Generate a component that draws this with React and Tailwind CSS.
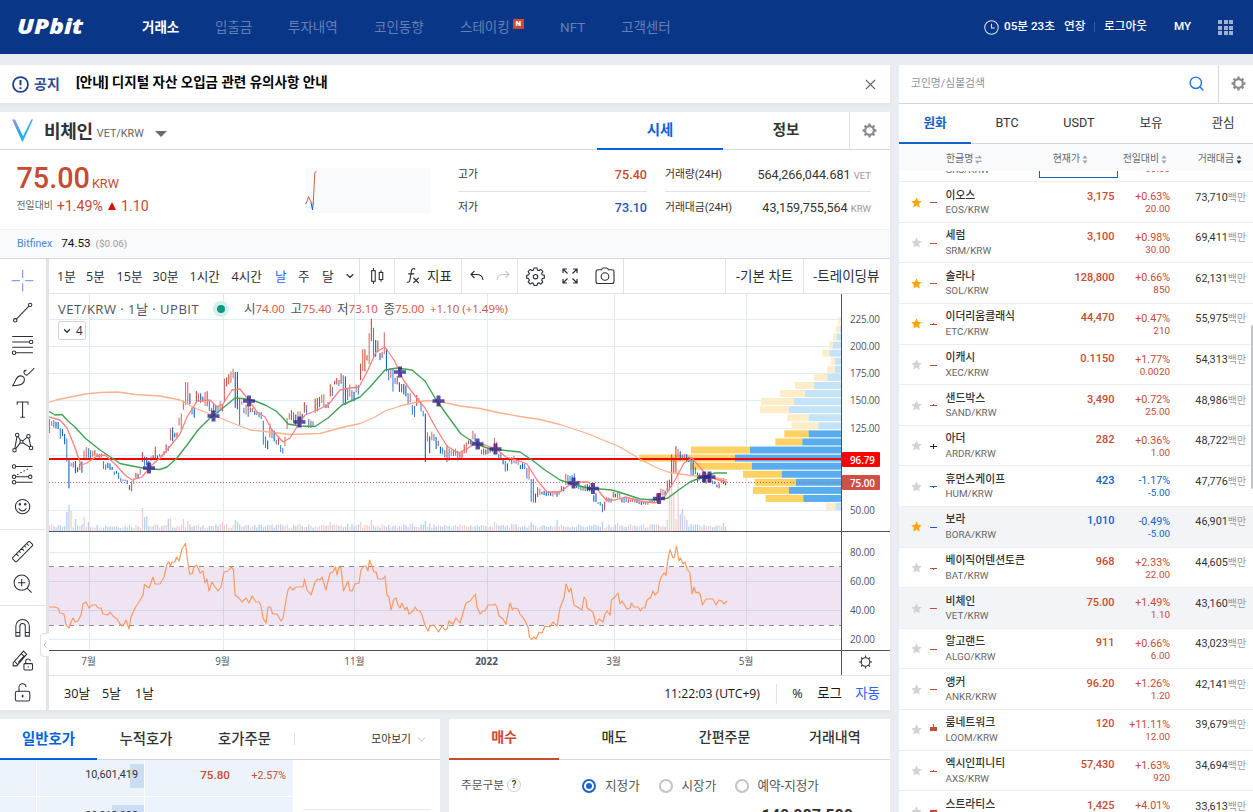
import { clsx } from "clsx";
import { Search, X, ChevronDown } from "lucide-react";

const NAV = [
  { label: "거래소", width: "w-[73px]", active: true },
  { label: "입출금", width: "w-[73px]" },
  { label: "투자내역", width: "w-[86px]" },
  { label: "코인동향", width: "w-[86px]" },
  { label: "스테이킹", width: "w-[100px]", isNew: true },
  { label: "NFT", width: "w-[61px]" },
  { label: "고객센터", width: "w-[60px]" },
];

const COINS = [
  { name: "이오스", code: "EOS", price: "3,175", rate: "+0.63%", diff: "20.00", volume: "73,710", fav: true },
  { name: "세럼", code: "SRM", price: "3,100", rate: "+0.98%", diff: "30.00", volume: "69,411" },
  { name: "솔라나", code: "SOL", price: "128,800", rate: "+0.66%", diff: "850", volume: "62,131", fav: true },
  { name: "이더리움클래식", code: "ETC", price: "44,470", rate: "+0.47%", diff: "210", volume: "55,975", fav: true, up: 1 },
  { name: "이캐시", code: "XEC", price: "0.1150", rate: "+1.77%", diff: "0.0020", volume: "54,313" },
  { name: "샌드박스", code: "SAND", price: "3,490", rate: "+0.72%", diff: "25.00", volume: "48,986", up: 1 },
  { name: "아더", code: "ARDR", price: "282", rate: "+0.36%", diff: "1.00", volume: "48,722", up: 2, down: 2, flat: true },
  { name: "휴먼스케이프", code: "HUM", price: "423", rate: "-1.17%", diff: "-5.00", volume: "47,776", down: 1 },
  { name: "보라", code: "BORA", price: "1,010", rate: "-0.49%", diff: "-5.00", volume: "46,901", fav: true, shaded: true },
  { name: "베이직어텐션토큰", code: "BAT", price: "968", rate: "+2.33%", diff: "22.00", volume: "44,605", down: 1 },
  { name: "비체인", code: "VET", price: "75.00", rate: "+1.49%", diff: "1.10", volume: "43,160", shaded: true },
  { name: "알고랜드", code: "ALGO", price: "911", rate: "+0.66%", diff: "6.00", volume: "43,023" },
  { name: "앵커", code: "ANKR", price: "96.20", rate: "+1.26%", diff: "1.20", volume: "42,141" },
  { name: "룸네트워크", code: "LOOM", price: "120", rate: "+11.11%", diff: "12.00", volume: "39,679", body: 4, up: 3 },
  { name: "엑시인피니티", code: "AXS", price: "57,430", rate: "+1.63%", diff: "920", volume: "34,694", up: 1 },
  { name: "스트라티스", code: "STRAX", price: "1,425", rate: "+4.01%", diff: "55.00", volume: "33,613", body: 2 },
];

// x, top, bottom of the daily range
const RANGE = [
  [49, 419, 437], [52, 418, 428], [55, 420, 429], [58, 421, 430], [61, 426, 440], [64, 433, 449], [67, 438, 463],
  [69, 457, 489], [72, 459, 470], [75, 460, 476], [78, 462, 477], [81, 459, 475], [84, 445, 462], [87, 445, 459],
  [91, 449, 459], [94, 448, 459], [97, 452, 458], [100, 453, 459], [103, 460, 470], [106, 463, 471], [109, 463, 470],
  [112, 466, 472], [115, 469, 476], [118, 472, 479], [121, 477, 482], [124, 479, 482], [127, 478, 485], [130, 482, 492],
  [132, 479, 493], [134, 476, 484], [137, 471, 480], [140, 468, 475], [143, 451, 462], [146, 452, 470], [149, 460, 469],
  [152, 455, 462], [155, 446, 460], [158, 455, 460], [161, 454, 458], [164, 450, 456], [167, 443, 453], [170, 425, 445],
  [173, 426, 444], [176, 432, 439], [179, 417, 430], [182, 413, 432], [184, 396, 412], [187, 382, 405], [190, 393, 405],
  [192, 404, 420], [194, 406, 420], [197, 389, 404], [200, 392, 403], [203, 395, 405], [206, 391, 408], [209, 400, 414],
  [212, 405, 418], [215, 403, 415], [218, 405, 414], [221, 401, 413], [224, 378, 402], [226, 377, 388], [229, 373, 385],
  [232, 371, 384], [234, 367, 380], [236, 371, 410], [239, 398, 426], [242, 398, 408], [245, 404, 417], [248, 404, 418],
  [252, 405, 415], [256, 408, 418], [260, 412, 420], [263, 420, 445], [267, 435, 452], [270, 423, 440], [273, 428, 443],
  [277, 437, 446], [280, 443, 453], [283, 445, 456], [286, 430, 450], [288, 417, 430], [290, 410, 424], [295, 412, 426],
  [300, 409, 424], [305, 400, 415], [311, 418, 428], [317, 398, 413], [322, 393, 408], [327, 401, 411], [332, 381, 402],
  [337, 378, 388], [342, 369, 385], [344, 375, 405], [348, 383, 402], [353, 388, 402], [359, 380, 397], [361, 363, 383],
  [363, 348, 372], [367, 351, 364], [370, 332, 365], [372, 318, 342], [374, 326, 359], [377, 340, 357], [381, 350, 362],
  [385, 331, 355], [387, 347, 372], [390, 367, 383], [392, 368, 393], [396, 373, 388], [400, 382, 393], [405, 383, 398],
  [409, 388, 408], [413, 402, 418], [418, 395, 407], [422, 398, 412], [424, 408, 418], [426, 412, 465], [428, 428, 447],
  [430, 435, 456], [433, 430, 442], [437, 435, 452], [442, 445, 455], [446, 445, 463], [449, 448, 464], [453, 447, 457],
  [461, 450, 462], [465, 442, 455], [470, 437, 447], [475, 429, 445], [478, 440, 450], [483, 448, 457], [490, 446, 455],
  [495, 436, 455], [499, 450, 462], [503, 458, 467], [507, 460, 472], [512, 455, 465], [517, 458, 465], [523, 462, 472],
  [528, 465, 482], [532, 478, 503], [536, 491, 506], [539, 487, 497], [543, 490, 496], [548, 490, 497], [557, 490, 497],
  [562, 485, 493], [567, 472, 485], [572, 473, 485], [578, 483, 490], [583, 483, 492], [588, 482, 493], [592, 487, 493],
  [595, 493, 503], [599, 500, 506], [603, 500, 513], [608, 497, 503], [615, 492, 500], [619, 488, 500], [623, 497, 503],
  [633, 498, 504], [643, 501, 505], [653, 498, 503], [658, 493, 503], [663, 488, 497], [668, 478, 492], [671, 454, 487],
  [673, 455, 475], [677, 445, 473], [679, 446, 463], [683, 452, 463], [688, 453, 465], [692, 457, 477], [695, 463, 477],
  [700, 472, 482], [705, 475, 485], [710, 473, 485], [715, 480, 485], [718, 482, 490], [723, 477, 485], [727, 482, 486],
];

const MA_SLOW =
  "49,402.5 56,400 68,397.5 85,394 100,392.5 118,392 135,394.5 160,396 180,400 195,408 215,416 235,424 250,430 270,432 290,434.5 320,433.5 342,427.5 360,423.5 375,417 385,411 400,406 415,402.5 427,400.5 440,401.5 460,406 480,408.5 500,413 520,416.5 540,419.5 560,424.5 580,431 590,434.5 604,440.5 618,446 630,453 640,459 655,467 668,472 680,474 690,475.5 717,478 727,480";
const MA_MID =
  "49,411.5 55,415 62,414.5 68,421 75,427 85,438 100,450 112,458 120,463.5 132,466 148,469 160,469.5 167,467 177,458 187,445 198,430 210,418 223,408 235,398 247,399 255,401 265,405 276,411 283,418 288,424 300,426 315,426.5 328,418 342,405 360,397 370,387 385,370 397,368 412,370 425,381 435,398 447,415 461,434 476,444 490,449 506,450.5 520,452 532,460 545,470 560,480 575,485 590,488.5 600,489 612,490 625,494 640,499 655,500 668,498 680,489 690,482 702,477 715,473 727,473";
const MA_FAST =
  "49,417 60,420 67,428 74,445 81,465 87,463 97,456 105,455 115,464 125,475 132,480 142,477 152,465 160,458 168,449 180,434 187,417 197,401 210,400 217,407 223,404 232,390 240,389 247,398 257,412 265,417 272,430 283,442 290,438 300,422 305,415 315,411 328,405 340,390 350,388 359,387 368,370 376,352 385,347 394,360 404,381 415,396 425,408 437,430 447,446 458,453 467,449 475,443 485,445 496,449 506,457 516,460 527,464 537,480 547,492 560,492 568,486 578,482 588,482 598,490 606,500 615,500 625,497 640,501 655,503 665,496 675,480 684,463 692,458 698,465 705,473 715,479 727,482";
const RSI =
  "49,607 54,607 58,608 60,613 64,614 66,625 69,628 71,622 73,618 75,622 78,621 81,615 83,604 86,602 89,608 92,605 96,605 98,608 101,608 103,614 108,615 110,612 113,616 117,619 120,624 122,626 124,624 126,620 129,629 131,617 135,608 139,602 143,595 144.5,584.5 149,588 153,577 155,584 160,584 164,577 167,564 169,562 170.5,566 172,562 175,562 176.5,557 179,561 182,549 185.5,543.5 187.5,560 189.5,574 192,574 194,567 196.5,565 198,568 200,573 203,571 205,583 207,579 209,591 212,582 215,587 218,591 221,587 224,572 228,571 231,567 233.5,570 235,595 239,598 242,602 246,598 249,603 252,596 256,602 259,602 261,606 263,618 266,623 268,607 270.5,607 272.5,614 277,614 281,621 283,618 286,600 288,590 290,587 293,590 296,587 303,587 304.5,579 307,590 311,595 315,582 318,579 320,580 322,577 326,590 330,573 333,572 335.5,567 337,575 339,567 341,568 343.5,591 348,581 350,591 352,591 355,584 359,583 361,570 364,566 366,566 368,571 369.5,560 374,572 376,572 378,579 383,579 385,576 387,595 389,597 391,610 394,599 396,598 398,605 400,608 402,603 405,610 407,607 409,614 413,611 415,607 417,610 420,611 422,615 425,625 428,631 430,626 434,625 438.5,632 442,626 445,630 447,629 449,621 453,624 456,618 460,623 463,613 466,603 470,601 475.5,594 477,607 480,614 483,611 485,611 488,605 493,605 495,604 497,607 499,616 503,619 506,624.5 508,613 510,603 512.5,610 514,608 518,609 520,614 524,619 528,627 529.5,637 531.5,639.5 534,637 536,639 539,632 542,633 545,626 550,627 553,622 557,626 560,608 564,598 566,584 569,592 571,588 574,605 579,608 582,610 584,597 586,600 587,608 590,610 593,612 596,625 599,619 603,622 605,614 607,611 610,615 611.5,600 615,597 618,593 620,604 622,601 627,609 630,608 631.5,603 634,607 638,607 640.5,611 642,608 645,608 647,600 651,597 653,591 655,595 658,592 659.5,582 661,578 664,573 666,575 668,559 670,549.5 673,558 674.5,557 676.5,546 679,561 680.5,558 683,564 685,562 687,569 690,573 692,594 694,587 696,593 698,592 700,594 702.5,605 706,599 713,599 716,605 719,600 722,601 724,604 727,601";

const CROSSES = [
  [149, 468], [213.5, 416], [249, 401], [299.5, 422], [400, 372], [438.5, 401], [477.5, 444],
  [495.5, 449], [573.5, 483], [593, 488.5], [659, 498.5], [704, 477], [709.5, 477],
];

// left edge and colour boundary of each volume profile row
const PROFILE = [
  [838, 841], [835.7, 840], [833, 836.7], [829.3, 833], [822.3, 829.3], [831, 835], [827, 835], [814, 827.3],
  [795, 814], [780, 805], [761, 794], [760, 789], [787, 808.7], [791.7, 818.3], [784.3, 808.7, 1], [775.3, 802.3, 1],
  [691, 750, 1], [639.3, 735, 1], [690.3, 752, 1], [743, 781.7, 1], [754.7, 796, 1], [753, 789, 1], [765.7, 803.3, 1],
  [826, 835.7],
];

// day index -> volume bar height
const VOLUME_SPIKES = {
  8: 19, 9: 26, 10: 20, 12: 12, 16: 14, 18: 9, 43: 23, 44: 14, 45: 15, 55: 12, 56: 13, 62: 12, 64: 10,
  80: 9, 86: 11, 87: 9, 130: 9, 144: 9, 149: 11, 174: 10, 206: 9, 223: 9, 235: 11, 256: 9, 263: 8, 286: 11,
  287: 46, 288: 66, 289: 39, 290: 12, 291: 62, 292: 17, 293: 22, 294: 15, 295: 11, 312: 8,
};

const V_GRID = [89, 223, 354, 487, 614, 746];
const PRICE_TICKS = [
  ["225.00", 319], ["200.00", 346], ["175.00", 373], ["150.00", 400], ["125.00", 428], ["50.00", 510],
];
const RSI_TICKS = [["80.00", 552], ["60.00", 581], ["40.00", 610], ["20.00", 639]];
const MONTHS = [["7월", 88.5], ["9월", 222.5], ["11월", 354.5], ["2022", 486.5], ["3월", 613.5], ["5월", 746]];

function noise(i) {
  const v = Math.sin(i * 12.9898) * 43758.5453;
  return v - Math.floor(v);
}

function buildDays() {
  const days = [];
  let k = 0;
  let prev = 428;
  for (let i = 0; i < 314; i++) {
    const x = 49.5 + i * 2.16;
    while (k < RANGE.length - 2 && RANGE[k + 1][0] < x) k++;
    const a = RANGE[k];
    const b = RANGE[k + 1];
    const near = x - a[0] < b[0] - x ? a : b;
    const len = near[2] - near[1];
    // long wicks keep their full reach
    const trim = len > 22 ? 0.06 : 0.35;
    const top = near[1] + noise(i) * len * trim;
    const bottom = near[2] - noise(i + 500) * len * trim;
    const mid = (top + bottom) / 2;
    const red = mid + (noise(i + 90) - 0.5) * 5 < prev;
    prev = mid;
    days.push({
      x,
      top,
      bottom,
      red,
      faint: noise(i + 230) > 0.5,
      volume: VOLUME_SPIKES[i] ?? 3 + noise(i + 40) * 4,
    });
  }
  return days;
}

const DAYS = buildDays();

function TradingChart() {
  return (
    <svg viewBox="49 294 841 381" className="block h-[381px] w-[841px] bg-white">
      {PRICE_TICKS.map(([, y]) => (
        <rect key={y} x="49" y={y} width="792" height="1" fill="#e1ecf2" />
      ))}
      <rect x="49" y="455" width="792" height="1" fill="#e1ecf2" />
      {RSI_TICKS.map(([, y]) => (
        <rect key={y} x="49" y={y} width="792" height="1" fill="#e1ecf2" />
      ))}
      {V_GRID.map((x) => (
        <rect key={x} x={x} y="294" width="1" height="356" fill="#dfeaf2" />
      ))}

      {/* volume */}
      {DAYS.map((d) => (
        <rect
          key={d.x}
          x={d.x - 0.6}
          y={531 - d.volume}
          width="1.3"
          height={d.volume}
          fill={d.red ? "#f3c5c2" : "#a9c8ec"}
          opacity="0.85"
        />
      ))}

      {/* volume profile */}
      {PROFILE.map(([left, split, strong], i) => {
        const y = 317.4 + i * 8.07;
        return (
          <g key={y} opacity={strong ? 1 : 0.9}>
            <rect x={left} y={y} width={split - left} height="7" fill={strong ? "#fdd262" : "#feecc4"} />
            <rect x={split} y={y} width={841 - split} height="7" fill={strong ? "#59adee" : "#bfe1f8"} />
          </g>
        );
      })}

      {/* daily candles */}
      {DAYS.map((d) => (
        <rect
          key={d.x}
          x={d.x - 0.55}
          y={d.top}
          width="1.1"
          height={d.bottom - d.top}
          fill={d.red ? "#cb4a40" : "#1261c4"}
          opacity={d.faint ? 0.78 : 1}
        />
      ))}

      <rect x="49" y="458" width="792" height="2" fill="#f80000" />
      <line x1="49" x2="841" y1="482.5" y2="482.5" stroke="#d3635c" strokeDasharray="1 2" />

      <g fill="none" strokeLinejoin="round">
        <polyline points={MA_SLOW} stroke="#ffb08c" strokeWidth="1.3" />
        <polyline points={MA_MID} stroke="#41a255" strokeWidth="1.4" />
        <polyline points={MA_FAST} stroke="#ff8080" strokeWidth="1.3" />
      </g>
      {CROSSES.map(([x, y]) => (
        <path
          key={x}
          d={`M${x - 2} ${y - 5.5}h4v3.7h4v3.6h-4v3.7h-4v-3.7h-4v-3.6h4z`}
          fill="#2a1f8c"
          opacity="0.78"
        />
      ))}

      {/* RSI */}
      <rect x="49" y="567" width="792" height="58" fill="#8e3fa0" opacity="0.14" />
      <path d="M49 566.5H841M49 625.5H841" stroke="#8c8790" strokeDasharray="5 5" />
      <polyline points={RSI} fill="none" stroke="#f99a62" strokeWidth="1.2" strokeLinejoin="round" />

      <rect x="49" y="531" width="841" height="1" fill="#50535e" />
      <rect x="49" y="650" width="841" height="1" fill="#50535e" />
      <rect x="841" y="294" width="1" height="381" fill="#50535e" />

      <g fontFamily="'Open Sans', 'Noto Sans CJK KR', sans-serif" fontSize="9.9" fill="#50535e">
        {[...PRICE_TICKS, ...RSI_TICKS].map(([label, y]) => (
          <text key={label} x="850" y={y + 4} textLength={label.length > 5 ? 30 : 25}>
            {label}
          </text>
        ))}
        {MONTHS.map(([label, x]) => (
          <text key={label} x={x} y="665" textAnchor="middle" fontWeight={label === "2022" ? 700 : 400}>
            {label}
          </text>
        ))}
        <rect x="842" y="452" width="38" height="15" rx="1" fill="#ff0000" />
        <rect x="842" y="475" width="38" height="15" rx="1" fill="#d24f45" />
        <text x="850" y="463.5" fill="#fff" fontWeight="600" textLength="25">96.79</text>
        <text x="850" y="487" fill="#fff" fontWeight="600" textLength="25">75.00</text>
      </g>

      <g fill="none" stroke="#2a2e39" strokeWidth="1.1">
        <circle cx="865.5" cy="662" r="4.3" />
        <path d="M865.5 657.5v-2M865.5 666.5v2M861 662h-2M870 662h2M862.4 658.9l-1.4-1.4M868.6 665.1l1.4 1.4M862.4 665.1l-1.4 1.4M868.6 658.9l1.4-1.4" />
      </g>
    </svg>
  );
}

function ToolIcon({ children, className }) {
  return (
    <div className="flex h-[32.4px] w-[45px] items-center justify-center">
      <svg
        viewBox="0 0 28 28"
        className={clsx("size-[25.2px]", className ?? "text-[#2a2e39]")}
        fill="none"
        stroke="currentColor"
        strokeWidth="1.15"
      >
        {children}
      </svg>
    </div>
  );
}

function DrawingTools() {
  return (
    <div className="relative w-[46px] shrink-0 bg-white pt-[5px]">
      <ToolIcon className="text-[#7ea3fb]">
        <path d="M14 2v9M14 17v9M2 14h9M17 14h9" strokeWidth="1.4" />
      </ToolIcon>
      <ToolIcon>
        <circle cx="5.8" cy="22.6" r="1.9" />
        <circle cx="22.4" cy="5.4" r="1.9" />
        <path d="M7.2 21.2L21 6.8" />
      </ToolIcon>
      <ToolIcon>
        <path d="M2.5 5h23M2.5 11h19M2.5 17h23M6.5 23h19" />
        <circle cx="23.5" cy="11" r="1.9" />
        <circle cx="4.5" cy="23" r="1.9" />
      </ToolIcon>
      <ToolIcon>
        <path d="M2.5 23c1.700-.8 2-3 3.300-5.300 1.700-4 4.700-6.500 8-5.200 2.800 1.200 3 5 .5 7.700-2.500 2.700-7 2.800-11.800 2.800zM16.200 5.500c-1.300 2-.8 5 1.600 5.700 1.200.2 2-.3 2.700-1.200L27 3.500M16.200 7l2-1.500" />
      </ToolIcon>
      <ToolIcon>
        <path d="M8 8.500v-3h12v3M14 5.500v17M11.500 22.500h5" />
      </ToolIcon>
      <ToolIcon>
        <circle cx="8" cy="5.500" r="1.900" />
        <circle cx="20.500" cy="7" r="1.900" />
        <circle cx="12.700" cy="13" r="1.700" />
        <circle cx="5" cy="22.500" r="1.900" />
        <circle cx="23.500" cy="20" r="1.900" />
        <path d="M7.700 7.400L5.400 20.600M9 7.200l2.800 4.400M14.200 12l4.800-3.800M20.900 8.900l2.200 9.200M14.200 14.200l7.700 4.800M11.500 14.300l-5.300 6.700" />
      </ToolIcon>
      <ToolIcon>
        <circle cx="4.500" cy="5" r="1.900" />
        <circle cx="4.500" cy="16.500" r="1.900" />
        <circle cx="22.500" cy="16.500" r="1.900" />
        <circle cx="4.500" cy="22.500" r="1.900" />
        <path d="M6.500 5H25M6.500 16.500h14M6.500 22.500H25" />
        <path d="M8 14L21 7" strokeDasharray="1.500 2.500" />
      </ToolIcon>
      <ToolIcon>
        <circle cx="14" cy="14" r="8" />
        <path d="M9.700 15.800c1 2 2.500 3 4.300 3s3.300-1 4.300-3" />
        <circle cx="11" cy="11.500" r=".8" fill="currentColor" />
        <circle cx="17" cy="11.500" r=".8" fill="currentColor" />
      </ToolIcon>
      <div className="mt-[6px] mb-[5px] h-px bg-[#e0e3eb]" />
      <ToolIcon>
        <path d="M3.200 20.300L20.300 3.200c.6-.6 1.400-.6 2 0l2.500 2.500c.6.6.6 1.400 0 2L7.700 24.800c-.6.6-1.400.6-2 0l-2.500-2.500c-.6-.6-.6-1.400 0-2zM7 16.500l2.500 2.500M10 13.500l1.700 1.700M13 10.500l2.500 2.500M16 7.500l1.700 1.700M18.500 5l2.500 2.500" />
      </ToolIcon>
      <ToolIcon>
        <circle cx="13" cy="13" r="8.500" />
        <path d="M13 9v8M9 13h8M19 19l5 5" />
      </ToolIcon>
      <div className="mt-[5px] mb-[5px] h-px bg-[#e0e3eb]" />
      <ToolIcon>
        <path d="M6.500 23.500V12.500a7.500 7.500 0 0115 0v11h-4.500v-11a3 3 0 00-6 0v11zM6.500 19.500h4.500M17 19.500h4.500" />
      </ToolIcon>
      <ToolIcon>
        <path d="M3.500 17.500L15 4.500l3.500 3.500L7.500 21H3.500zM5 15.800l3.300 3.400M12.500 7.200l3.500 3.400M9.300 17L16 9.500" />
        <rect x="15.500" y="18.500" width="9.500" height="7" rx="1" />
        <path d="M17.500 18.500v-2.300a2.600 2.600 0 015.200-.4M20.200 21.500v1.200" />
      </ToolIcon>
      <ToolIcon>
        <rect x="6" y="13.500" width="16" height="11" rx="2" />
        <path d="M10 13.500V10a4 4 0 018-1.300" />
        <path d="M14 17.500v3" strokeWidth="1.800" />
      </ToolIcon>
      <button
        type="button"
        className="absolute top-[374px] left-[40px] z-10 flex h-[24px] w-[9px] items-center justify-center rounded-l border border-r-0 border-[#e0e3eb] bg-white"
      >
        <svg viewBox="0 0 6 10" className="h-[8px] w-[4px]" fill="none" stroke="#9598a1">
          <path d="M5 1L1.500 5 5 9" />
        </svg>
      </button>
    </div>
  );
}

function Gear({ className }) {
  return (
    <svg viewBox="0 0 16 16" className={className}>
      <circle cx="8" cy="8" r="4.600" fill="none" stroke="currentColor" strokeWidth="2.300" />
      <path
        d="M8 .6v2.600M8 12.800v2.600M.6 8h2.600M12.800 8h2.600M2.800 2.800l1.800 1.800M11.400 11.400l1.800 1.800M2.800 13.200l1.800-1.800M11.400 4.600l1.800-1.800"
        stroke="currentColor"
        strokeWidth="2.500"
      />
    </svg>
  );
}

function ChartToolbar() {
  const cell = "flex h-full items-center border-r border-[#e0e3eb]";
  return (
    <div className="flex h-[35px] items-center border-b border-[#e0e3eb] bg-white font-['Open_Sans','Noto_Sans_CJK_KR',sans-serif] text-[12.600px] leading-none text-[#2a2e39]">
      <div className={clsx(cell, "w-[311px] pt-[2px] pl-[8px]")}>
        <span className="w-[29px]">1분</span>
        <span className="w-[30.500px]">5분</span>
        <span className="w-[36px]">15분</span>
        <span className="w-[37px]">30분</span>
        <span className="w-[42px]">1시간</span>
        <span className="w-[43.500px]">4시간</span>
        <span className="w-[23px] text-[#2962ff]">날</span>
        <span className="w-[24px]">주</span>
        <span className="w-[22px]">달</span>
        <ChevronDown className="mb-[2px] size-[12px]" strokeWidth={2.200} />
      </div>
      <div className={clsx(cell, "w-[35px] justify-center")}>
        <svg viewBox="0 0 18 20" className="h-[18px] w-[16px]" fill="none" stroke="currentColor" strokeWidth="1.200">
          <path d="M5 1v3M5 16v3M13.500 3.500V6M13.500 14v2.500" />
          <rect x="3" y="4" width="4" height="12" />
          <rect x="11.500" y="6" width="4" height="8" />
        </svg>
      </div>
      <div className={clsx(cell, "w-[67px] pl-[11px]")}>
        <svg viewBox="0 0 16 20" className="mr-[7px] h-[18px] w-[14px]" fill="none" stroke="currentColor" strokeWidth="1.300">
          <path d="M10.500 2.500C8.500.8 6.700 1.800 6.300 4L4.500 14.500c-.4 2-1.500 3-3.500 2.500M2.500 7.500h7M8.500 12l6 6M14.500 12l-6 6" />
        </svg>
        <span className="pt-[2px] text-[13.500px]">지표</span>
      </div>
      <div className={clsx(cell, "w-[56px] gap-[12px] pl-[8px]")}>
        <svg viewBox="0 0 14 12" className="h-[12px] w-[14px]" fill="none" stroke="currentColor" strokeWidth="1.100">
          <path d="M4.500 1L1 4.500 4.500 8M1 4.500h6c3.500 0 5.500 2 6 5.500" />
        </svg>
        <svg viewBox="0 0 14 12" className="h-[12px] w-[14px]" fill="none" stroke="#c5c8d0" strokeWidth="1.100">
          <path d="M9.500 1L13 4.500 9.500 8M13 4.500H7c-3.500 0-5.500 2-6 5.500" />
        </svg>
      </div>
      <div className={clsx(cell, "w-[106px] gap-[17px] pl-[8px]")}>
        <svg viewBox="0 0 20 20" className="size-[19px]" fill="none" stroke="currentColor" strokeWidth="1.200">
          <path d="M8.500 1h3l.6 2.200 1.500.6 2-1.200 2.100 2.100-1.200 2 .6 1.500 2.200.6v2.900l-2.200.6-.6 1.500 1.200 2-2.100 2.100-2-1.200-1.500.6-.6 2.200h-3l-.6-2.200-1.500-.6-2 1.200-2.100-2.100 1.200-2-.6-1.500-2.200-.6V8.800l2.200-.6.6-1.500-1.200-2 2.100-2.100 2 1.200 1.500-.6z" />
          <circle cx="10" cy="10.200" r="2.300" />
        </svg>
        <svg viewBox="0 0 16 16" className="size-[16px]" fill="none" stroke="currentColor" strokeWidth="1.200">
          <path d="M1 5V1h4M11 1h4v4M15 11v4h-4M5 15H1v-4M1 1l4.500 4.500M15 1l-4.500 4.500M15 15l-4.500-4.500M1 15l4.500-4.500" />
        </svg>
        <svg viewBox="0 0 20 18" className="h-[18px] w-[20px]" fill="none" stroke="currentColor" strokeWidth="1.100">
          <path d="M6.500 2.800c.5-1.300 1-1.800 2-1.800h3c1 0 1.500.5 2 1.800h3.500a2 2 0 012 2v9.700a2 2 0 01-2 2H3a2 2 0 01-2-2V4.800a2 2 0 012-2z" />
          <circle cx="10" cy="9.500" r="3.800" />
        </svg>
      </div>
      <div className={clsx(cell, "w-[102px]")} />
      <div className={clsx(cell, "w-[78px] justify-center pt-[2px] text-[13.500px]")}>-기본 차트</div>
      <div className="flex-1 pt-[2px] pl-[9px] text-[13.500px] whitespace-nowrap">-트레이딩뷰</div>
    </div>
  );
}

function ChartLegend() {
  const prices = [["시", "74.00"], ["고", "75.40"], ["저", "73.10"], ["종", "75.00"]];
  return (
    <div className="absolute top-[7px] left-[9px] font-['Open_Sans','Noto_Sans_CJK_KR',sans-serif] leading-none text-[#50535e]">
      <div className="flex h-[16px] items-center">
        <span className="w-[155px] text-[13px] tracking-[0.500px] whitespace-nowrap">VET/KRW · 1날 · UPBIT</span>
        <span className="flex size-[16px] items-center justify-center rounded-full bg-[#d6efec]">
          <span className="size-[8px] rounded-full bg-[#089981]" />
        </span>
        <div className="ml-[15px] flex items-center text-[11.500px] whitespace-nowrap">
          {prices.map(([label, value]) => (
            <span key={label} className="w-[46.500px]">
              <span className="text-[12.600px]">{label}</span>
              <span className="text-[#d24f45]">{value}</span>
            </span>
          ))}
          <span className="text-[#d24f45]">+1.10 (+1.49%)</span>
        </div>
      </div>
      <div className="mt-[4px] flex h-[19px] w-[28px] items-center gap-[4px] rounded-[2px] border border-[#d1d4dc] bg-white pl-[3px] text-[11.700px] text-[#2a2e39]">
        <ChevronDown className="size-[10px]" strokeWidth={3} />4
      </div>
    </div>
  );
}

function Header() {
  return (
    <header className="flex h-[54px] items-center bg-[#093687] text-white">
      <svg viewBox="0 0 76 28" className="ml-[16px] h-[28px] w-[76px]">
        <text
          x="1"
          y="21"
          fontFamily="'Open Sans', Roboto, sans-serif"
          fontSize="20.500"
          fontWeight="800"
          fontStyle="italic"
          fill="#fff"
          textLength="66"
          lengthAdjust="spacingAndGlyphs"
        >
          UPbit
        </text>
      </svg>
      <nav className="ml-[50px] flex text-[13.500px] leading-[20px]">
        {NAV.map((item) => (
          <a
            key={item.label}
            className={clsx("flex", item.width, item.active ? "font-bold text-white" : "text-[#6480b6]")}
          >
            {item.label}
            {item.isNew && (
              <span className="mt-[2px] ml-[3px] flex h-[10px] w-[11px] items-center justify-center bg-[#d1492e] text-[8px] font-black text-white">
                N
              </span>
            )}
          </a>
        ))}
      </nav>
      <div className="ml-auto flex items-center text-[11.700px] leading-none font-medium whitespace-nowrap">
        <svg viewBox="0 0 16 16" className="mr-[5px] size-[15px]" fill="none" stroke="#dfe6f3" strokeWidth="1.100">
          <circle cx="8" cy="8" r="7.200" />
          <path d="M8 4v4.500h3.500" />
        </svg>
        <span className="w-[60px]">05분 23초</span>
        <span className="w-[30px]">연장</span>
        <span className="mr-[9px] h-[10px] w-px bg-[#3a5e9f]" />
        <span className="w-[70px]">로그아웃</span>
        <span className="w-[44px]">MY</span>
        <div className="mt-px mr-[20px] grid grid-cols-3 gap-[1.500px]">
          {Array.from({ length: 9 }, (_, i) => (
            <span key={i} className="size-[4px] bg-[#9fb1d3]" />
          ))}
        </div>
      </div>
    </header>
  );
}

function Notice() {
  return (
    <div className="flex h-[38px] items-center bg-white shadow-[0_2px_4px_rgba(0,0,0,0.04)]">
      <svg viewBox="0 0 18 18" className="ml-[12px] size-[17px]" fill="none" stroke="#1d3f8a" strokeWidth="1.900">
        <circle cx="9" cy="9" r="7.900" />
        <path d="M9 4.200v5.600M9 11.800v2" strokeWidth="2.100" />
      </svg>
      <span className="ml-[5px] w-[42px] text-[14px] leading-none font-bold text-[#2b4a92]">공지</span>
      <span className="pb-[3px] text-[13.500px] leading-none font-bold tracking-[0.020px] text-black">
        [안내] 디지털 자산 오입금 관련 유의사항 안내
      </span>
      <X className="mr-[11px] ml-auto size-[17px] text-[#666]" strokeWidth={1.500} />
    </div>
  );
}

function CoinTitle() {
  return (
    <div className="flex h-[38px] items-center border-b border-[#d4d6dc]">
      <svg viewBox="0 0 22 24" className="ml-[12px] h-[23px] w-[21px]">
        <defs>
          <linearGradient id="vetLeft" x1="0" y1="0" x2="0.500" y2="1">
            <stop offset="0" stopColor="#a98fd8" />
            <stop offset="0.550" stopColor="#30a9ee" />
            <stop offset="1" stopColor="#1fb2f5" />
          </linearGradient>
        </defs>
        <path d="M0 .5h3.200l8.300 17.500L20.300.5H22L11.400 23.500h-.9z" fill="url(#vetLeft)" />
      </svg>
      <h1 className="mt-[2px] ml-[11px] text-[18px] leading-none font-bold tracking-[-0.300px] text-[#333]">비체인</h1>
      <span className="mt-[8px] ml-[4px] text-[10.800px] leading-none text-[#666]">VET/KRW</span>
      <span className="mt-[6px] ml-[11px] border-x-[6px] border-t-[6px] border-x-transparent border-t-[#666a77]" />
      <div className="ml-auto flex h-[38px] self-start text-[14.400px] leading-none font-bold">
        <a className="flex w-[126px] items-center justify-center border-b-2 border-[#0062df] pt-[3px] text-[#0062df]">
          시세
        </a>
        <a className="flex w-[126px] items-center justify-center pt-px text-[#333]">정보</a>
      </div>
      <div className="flex h-full w-[41px] items-center justify-center border-l border-[#dfe1e6] pr-px pb-px">
        <Gear className="size-[15px] text-[#888b94]" />
      </div>
    </div>
  );
}

function PriceSummary() {
  return (
    <div className="flex h-[79px]">
      <div className="w-[305px] pt-[14px] pl-[16.500px] text-[#c84a31]">
        <div className="flex items-baseline text-[28.800px] leading-[28px] font-medium">
          75.00<span className="ml-[2px] text-[12.600px] leading-none font-normal">KRW</span>
        </div>
        <div className="mt-[7px] flex h-[14px] items-center text-[14.200px] leading-[14px]">
          <span className="mr-[4px] text-[9.900px] text-[#666]">전일대비</span>
          +1.49%
          <span className="mx-[5px] border-x-[4.500px] border-b-[8px] border-x-transparent border-b-[#dd1100]" />
          1.10
        </div>
      </div>
      <svg viewBox="0 0 126 45" className="mt-[18px] h-[45px] w-[126px] bg-[#f9fafc]" fill="none">
        <path d="M.5 36l1.500-2.500M6 34l1.500 8 .8-8" stroke="#1261c4" />
        <path d="M2 33.500L3.500 28.500 6 34M8.300 34L9.800 5l1.500-2" stroke="#d4604a" />
      </svg>
      <div className="mt-[9px] ml-[27px] w-[189px] text-[10.800px] leading-none text-[#333]">
        <div className="flex h-[33px] items-center justify-between border-b border-[#dfe1ea]">
          고가<span className="text-[12.600px] font-medium text-[#c84a31]">75.40</span>
        </div>
        <div className="flex h-[32px] items-center justify-between">
          저가<span className="text-[12.600px] font-medium text-[#2453be]">73.10</span>
        </div>
      </div>
      <div className="mt-[9px] ml-[18px] w-[206px] text-[10.800px] leading-none text-[#333]">
        <div className="flex h-[33px] items-center justify-between border-b border-[#dfe1ea]">
          거래량(24H)
          <span className="text-[12.600px]">
            564,266,044.681 <span className="text-[9.500px] text-[#999]">VET</span>
          </span>
        </div>
        <div className="flex h-[32px] items-center justify-between">
          거래대금(24H)
          <span className="text-[12.600px]">
            43,159,755,564 <span className="text-[9.500px] text-[#999]">KRW</span>
          </span>
        </div>
      </div>
    </div>
  );
}

function ChartCard() {
  return (
    <section className="h-[598px] bg-white shadow-[0_2px_4px_rgba(0,0,0,0.04)]">
      <CoinTitle />
      <PriceSummary />
      <div className="flex h-[30px] items-center border-t border-b border-t-[#f1f2f6] border-b-[#d4d6dc] bg-[#f9fafc] pl-[17px] text-[10.600px] leading-none">
        <span className="text-[#4a87cc]">Bitfinex</span>
        <span className="ml-[9px] text-[11.700px] text-[#111]">74.53</span>
        <span className="ml-[5px] text-[9.900px] text-[#999]">($0.06)</span>
      </div>
      <div className="flex h-[451px]">
        <DrawingTools />
        <div className="w-[3px] bg-[#e0e3eb]" />
        <div className="w-[841px]">
          <ChartToolbar />
          <div className="relative">
            <TradingChart />
            <ChartLegend />
          </div>
          <div className="flex h-[35px] items-center border-t border-[#e0e3eb] pt-[2px] pl-[15px] font-['Open_Sans','Noto_Sans_CJK_KR',sans-serif] text-[12.600px] leading-none text-[#131722]">
            <span className="w-[38px]">30날</span>
            <span className="w-[33px]">5날</span>
            <span>1날</span>
            <span className="ml-auto w-[112px] text-[12.200px]">11:22:03 (UTC+9)</span>
            <span className="mr-[15px] h-[20px] w-px bg-[#e0e3eb]" />
            <span className="w-[25px]">%</span>
            <span className="w-[38px] text-[13.500px]">로그</span>
            <span className="mr-[10px] text-[13.500px] text-[#2962ff]">자동</span>
          </div>
        </div>
      </div>
    </section>
  );
}

function OrderBook() {
  const rows = [
    { amount: "10,601,419", price: "75.80", rate: "+2.57%", bar: "w-[14px]" },
    { amount: "28,313,882", price: "75.70", rate: "+2.44%", bar: "w-[32px]" },
  ];
  return (
    <section className="h-[93px] w-[440px] overflow-hidden bg-white">
      <div className="flex h-[41px] items-center border-b border-[#d4d6dc] text-[14.400px] leading-none font-medium text-[#333]">
        <a className="flex h-[41px] w-[97px] items-center justify-center self-start border-b-2 border-[#0062df] pt-[3px] font-bold text-[#0062df]">
          일반호가
        </a>
        <a className="w-[98px] pt-[2px] text-center">누적호가</a>
        <a className="w-[99px] pt-[2px] text-center">호가주문</a>
        <span className="h-[12px] w-px bg-[#dfe1e6]" />
        <span className="mt-[3px] mr-[4px] ml-auto text-[10.800px] font-normal">모아보기</span>
        <ChevronDown className="mr-[12px] size-[13px] text-[#aaa]" strokeWidth={1.500} />
      </div>
      <div className="flex h-[52px] overflow-hidden">
        <div className="-mt-[4px] w-[293px] shrink-0">
          {rows.map((row) => (
            <div key={row.price} className="flex h-[41px] border-b border-white bg-[#ecf3fb] leading-none">
              <div className="w-[37px] border-r border-white" />
              <div className="relative flex w-[108px] items-center justify-end border-r border-white pr-[6px] pb-px">
                <span className={clsx("absolute top-[8px] right-0 h-[24px] bg-[#ccdcf2]", row.bar)} />
                <span className="relative text-[10.800px] text-[#333]">{row.amount}</span>
              </div>
              <div className="flex flex-1 items-center text-[#c84a31]">
                <span className="w-[85px] text-right text-[11.700px] font-medium">{row.price}</span>
                <span className="w-[56px] text-right text-[10.600px]">{row.rate}</span>
              </div>
            </div>
          ))}
        </div>
        <div className="mt-[49px] ml-[10px] h-px w-[128px] bg-[#e7e9ee]" />
      </div>
    </section>
  );
}

function OrderForm() {
  const types = [
    { label: "지정가", width: "w-[76.500px]", checked: true },
    { label: "시장가", width: "w-[76px]" },
    { label: "예약-지정가", width: "w-[90px]" },
  ];
  return (
    <section className="h-[93px] w-[441px] overflow-hidden bg-white">
      <div className="grid h-[41px] grid-cols-4 border-b border-[#d4d6e0] text-center text-[14px] leading-[37px] font-medium text-[#333]">
        <a className="h-[41px] border-b-2 border-[#c84a31] font-bold text-[#c84a31]">매수</a>
        <a>매도</a>
        <a>간편주문</a>
        <a>거래내역</a>
      </div>
      <div className="flex h-[50px] items-center pt-[2px] pl-[12px] text-[11.700px] leading-none text-[#555]">
        <span>주문구분</span>
        <span className="mb-[3px] ml-[3px] flex size-[14px] items-center justify-center rounded-full border border-[#ccc] text-[10px] font-medium text-[#333]">
          ?
        </span>
        <div className="ml-[61px] flex text-[12.600px]">
          {types.map((t) => (
            <label key={t.label} className={clsx("flex items-center gap-[9px] whitespace-nowrap", t.width)}>
              <span
                className={clsx(
                  "flex size-[14px] shrink-0 items-center justify-center rounded-full border-2",
                  t.checked ? "border-[#1e62cc]" : "border-[#c4c4c4]"
                )}
              >
                {t.checked && <span className="size-[6px] rounded-full bg-[#1e62cc]" />}
              </span>
              {t.label}
            </label>
          ))}
        </div>
      </div>
      <div className="-mt-[3px] pr-[37px] text-right text-[16.200px] leading-[18px] font-bold text-[#333]">140,987,500</div>
    </section>
  );
}

function SortArrows({ active }) {
  return (
    <svg viewBox="0 0 6 9" className="ml-[2px] h-[9px] w-[6px]">
      <path d="M3 .3l2.500 3.200h-5z" fill={active ? "#666a77" : "#a0a4b8"} />
      <path d="M3 8.700l2.500-3.200h-5z" fill={active ? "#222" : "#a0a4b8"} />
    </svg>
  );
}

function CoinRow({ coin }) {
  const falling = coin.rate.startsWith("-");
  const tone = falling ? "text-[#1261c4]" : "text-[#c84a31]";
  const { body = 1, up = 0, down = 0 } = coin;
  return (
    <div
      className={clsx(
        "flex h-[40.600px] border-b border-[#ebedf0] leading-none",
        coin.shaded ? "bg-[#f3f4f8]" : "bg-white"
      )}
    >
      <svg viewBox="0 0 12 12" className="mt-[14.500px] ml-[12px] size-[11px]" fill={coin.fav ? "#ffa800" : "#d2d3d6"}>
        <path d="M6 .4l1.750 3.700 4 .5-2.950 2.800.75 4L6 9.450 2.450 11.400l.75-4L.25 4.600l4-.5z" />
      </svg>
      <svg
        viewBox="0 0 7 13"
        className={clsx("mt-[14px] ml-[8px] h-[13px] w-[7px]", coin.flat ? "text-[#222]" : tone)}
        fill="currentColor"
        shapeRendering="crispEdges"
      >
        <rect x="0" y={7 - body} width="7" height={body} />
        <rect x="3" y={7 - body - up} width="1" height={body + up + down} />
      </svg>
      <div className="ml-[8.500px] w-[90px] pt-[7.500px] whitespace-nowrap">
        <div className="text-[10.800px] leading-[12px] font-medium text-[#333]">{coin.name}</div>
        <div className="mt-[2.500px] text-[9.900px] leading-[12px] text-[#666]">{coin.code}/KRW</div>
      </div>
      <div className={clsx("w-[79px] pt-[8.500px] text-right text-[11px] leading-[12px] font-medium", tone)}>
        {coin.price}
      </div>
      <div className={clsx("w-[55.500px] pt-[9px] text-right text-[10.700px] leading-[12px]", tone)}>
        <div>{coin.rate}</div>
        <div className="text-[9.900px]">{coin.diff}</div>
      </div>
      <div className="w-[76px] shrink-0 pt-[9.500px] text-right text-[10.800px] leading-[12px] text-[#333]">
        {coin.volume}
        <span className="text-[9.900px] text-[#999]">백만</span>
      </div>
    </div>
  );
}

function CoinList() {
  return (
    <aside className="relative flex h-[747px] w-[354px] flex-col overflow-hidden bg-white">
      <div className="flex h-[39px] shrink-0 items-center border-b border-[#d4d6dc]">
        <span className="ml-[12px] text-[10.800px] leading-none text-[#8e92a2]">코인명/심볼검색</span>
        <Search className="mt-[-2px] mr-[13px] ml-auto size-[17px] text-[#1f72f0]" strokeWidth={2} />
        <div className="flex h-full w-[35px] items-center justify-center border-l border-[#d4d6dc] pb-px pl-[5px]">
          <Gear className="size-[15px] text-[#888b90]" />
        </div>
      </div>
      <div className="flex h-[40px] shrink-0 items-center border-b border-[#d4d6dc] text-[12.600px] leading-none text-[#333] [&>a]:w-[72px] [&>a]:shrink-0 [&>a]:text-center">
        <a className="flex h-[40px] items-center justify-center self-start border-b-2 border-[#1261c4] font-bold text-[#1261c4]">
          원화
        </a>
        <a>BTC</a>
        <a>USDT</a>
        <a>보유</a>
        <a>관심</a>
      </div>
      <div className="flex h-[27px] shrink-0 items-center bg-[#f9fafc] pt-[3px] text-[9.900px] leading-none text-[#666]">
        <span className="flex w-[89px] items-center pl-[47px] whitespace-nowrap">
          한글명
          <svg viewBox="0 0 7 10" className="ml-[2px] h-[9px] w-[7px]" fill="none" stroke="#8e92a8" strokeWidth="1.200">
            <path d="M0 3h6L4 .8M7 7H1l2 2.200" />
          </svg>
        </span>
        <span className="flex w-[100px] items-center justify-end">현재가<SortArrows /></span>
        <span className="flex w-[79px] items-center justify-end">전일대비<SortArrows /></span>
        <span className="flex w-[75px] items-center justify-end">거래대금<SortArrows active /></span>
      </div>
      <div className="relative min-h-0 flex-1 overflow-hidden">
        <div className="-mt-[29.400px]">
          <div className="relative">
            <CoinRow coin={{ name: "그로스톨코인", code: "GRS", price: "1,060", rate: "+6.00%", diff: "60.00", volume: "74,102" }} />
            <span className="absolute top-[2px] left-[140px] h-[34px] w-[79px] border border-[#1b5fb8]" />
          </div>
          {COINS.map((coin) => (
            <CoinRow key={coin.code} coin={coin} />
          ))}
        </div>
        <div className="absolute top-[154px] right-0 h-[164px] w-[2px] rounded-l bg-[#c2c3c7]" />
      </div>
    </aside>
  );
}

export default function App() {
  return (
    <div className="h-[812px] w-[1253px] overflow-hidden bg-[#e9ecf1] font-['Roboto','Noto_Sans_CJK_KR',sans-serif]">
      <Header />
      <main className="flex gap-[9px] pt-[11px]">
        <div className="flex w-[890px] shrink-0 flex-col gap-[9px]">
          <Notice />
          <ChartCard />
          <div className="flex gap-[9px]">
            <OrderBook />
            <OrderForm />
          </div>
        </div>
        <CoinList />
      </main>
    </div>
  );
}
